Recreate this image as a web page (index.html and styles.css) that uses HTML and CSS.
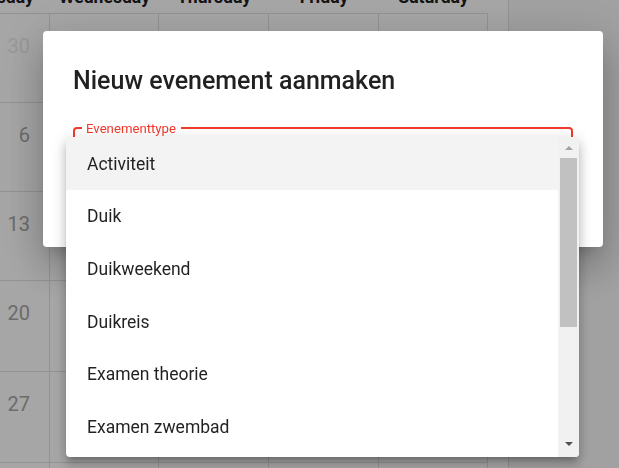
FILE: index.html
```html
<!DOCTYPE html>
<html lang="nl">
<head>
<meta charset="utf-8">
<title>Nieuw evenement aanmaken</title>
<link rel="stylesheet" href="styles.css">
</head>
<body>
<div class="app">
  <main class="calendar-pane">
    <div class="calendar">
      <div class="cal-head first">Tuesday</div>
      <div class="cal-head">Wednesday</div>
      <div class="cal-head">Thursday</div>
      <div class="cal-head">Friday</div>
      <div class="cal-head">Saturday</div>

      <div class="cal-cell"><span class="day muted">30</span></div>
      <div class="cal-cell"><span class="day muted">31</span></div>
      <div class="cal-cell"><span class="day">1</span></div>
      <div class="cal-cell"><span class="day">2</span></div>
      <div class="cal-cell"><span class="day">3</span></div>

      <div class="cal-cell"><span class="day">6</span></div>
      <div class="cal-cell"><span class="day">7</span></div>
      <div class="cal-cell"><span class="day">8</span></div>
      <div class="cal-cell"><span class="day">9</span></div>
      <div class="cal-cell"><span class="day">10</span></div>

      <div class="cal-cell"><span class="day">13</span></div>
      <div class="cal-cell"><span class="day">14</span></div>
      <div class="cal-cell"><span class="day">15</span></div>
      <div class="cal-cell"><span class="day">16</span></div>
      <div class="cal-cell"><span class="day">17</span></div>

      <div class="cal-cell"><span class="day">20</span></div>
      <div class="cal-cell"><span class="day">21</span></div>
      <div class="cal-cell"><span class="day">22</span></div>
      <div class="cal-cell"><span class="day">23</span></div>
      <div class="cal-cell"><span class="day">24</span></div>

      <div class="cal-cell"><span class="day">27</span></div>
      <div class="cal-cell"><span class="day">28</span></div>
      <div class="cal-cell"><span class="day">29</span></div>
      <div class="cal-cell"><span class="day">30</span></div>
      <div class="cal-cell"><span class="day">31</span></div>

      <div class="cal-cell"></div>
      <div class="cal-cell"></div>
      <div class="cal-cell"></div>
      <div class="cal-cell"></div>
      <div class="cal-cell"></div>
    </div>
  </main>
  <aside class="side-pane"></aside>
</div>

<div class="scrim"></div>

<div class="dialog">
  <h2 class="dialog-title">Nieuw evenement aanmaken</h2>
  <fieldset class="field">
    <legend class="field-label">Evenementtype</legend>
  </fieldset>
</div>

<div class="menu">
  <ul class="menu-list">
    <li class="menu-item active">Activiteit</li>
    <li class="menu-item">Duik</li>
    <li class="menu-item">Duikweekend</li>
    <li class="menu-item">Duikreis</li>
    <li class="menu-item">Examen theorie</li>
    <li class="menu-item">Examen zwembad</li>
  </ul>
  <div class="scrollbar">
    <div class="sb-btn"><span class="arrow arrow-up"></span></div>
    <div class="sb-track"><div class="sb-thumb"></div></div>
    <div class="sb-btn sb-btn-down"><span class="arrow arrow-down"></span></div>
  </div>
</div>
</body>
</html>
```

FILE: styles.css
```css
* { box-sizing: border-box; }

html, body {
  margin: 0;
  padding: 0;
}

body {
  width: 619px;
  height: 468px;
  overflow: hidden;
  background: #ffffff;
  font-family: Roboto, "Noto Sans", "Liberation Sans", sans-serif;
  color: rgba(0, 0, 0, 0.87);
}

.app {
  display: flex;
  height: 468px;
}

.calendar-pane {
  flex: none;
  width: 509px;
  overflow: hidden;
  background: #ffffff;
  border-right: 1px solid #e0e0e0;
}

.side-pane {
  flex: 1;
  background: #f7f7f7;
}

.calendar {
  display: grid;
  grid-template-columns: 111px 109px 110px 110px 109px;
  grid-template-rows: 26px 89px 89px 89px 91px 91px 40px;
  margin: -12px 0 0 -61px;
  width: 549px;
}

.cal-head {
  border-bottom: 1px solid #e0e0e0;
  text-align: center;
  font-size: 17.6px;
  font-weight: 700;
  line-height: 14px;
  padding-top: 1.5px;
  color: #202020;
  overflow: hidden;
}

.cal-head.first {
  padding-left: 12px;
}

.cal-cell {
  border-right: 1px solid #e0e0e0;
  border-bottom: 1px solid #e0e0e0;
  display: flex;
  justify-content: flex-end;
  align-items: flex-start;
  padding: 20px 19px 0 0;
}

.day {
  font-size: 20px;
  line-height: 24px;
  color: #a6a6a6;
}

.day.muted {
  color: #e9e9e9;
}

.scrim {
  position: fixed;
  inset: 0;
  background: rgba(0, 0, 0, 0.35);
}

.dialog {
  position: fixed;
  left: 43px;
  top: 31px;
  width: 560px;
  height: 216px;
  background: #ffffff;
  border-radius: 4px;
  padding: 36px 30px 0 30px;
  box-shadow: 0 11px 15px -7px rgba(0, 0, 0, 0.2),
              0 24px 38px 3px rgba(0, 0, 0, 0.14),
              0 9px 46px 8px rgba(0, 0, 0, 0.12);
}

.dialog-title {
  margin: 0;
  font-size: 25px;
  font-weight: 500;
  line-height: 28px;
  color: rgba(0, 0, 0, 0.87);
}

.field {
  margin: 24px 0 0 0;
  padding: 0 0 0 7px;
  min-width: 0;
  height: 62px;
  border: 2px solid #f2392c;
  border-radius: 4px;
}

.field-label {
  padding: 2px 5px 0 4px;
  font-size: 13.2px;
  line-height: 16px;
  color: #f2392c;
}

.menu {
  position: fixed;
  left: 66px;
  top: 137px;
  width: 513px;
  height: 320px;
  display: flex;
  background: #ffffff;
  border-radius: 4px;
  overflow: hidden;
  box-shadow: 0 5px 5px -3px rgba(0, 0, 0, 0.2),
              0 8px 10px 1px rgba(0, 0, 0, 0.14),
              0 3px 14px 2px rgba(0, 0, 0, 0.12);
}

.menu-list {
  flex: 1;
  margin: 0;
  padding: 0;
  list-style: none;
  overflow: hidden;
}

.menu-item {
  height: 52.6px;
  display: flex;
  align-items: center;
  padding: 1px 21px 0 21px;
  font-size: 17.5px;
  color: rgba(0, 0, 0, 0.87);
}

.menu-item.active {
  background: #f3f3f3;
}

.scrollbar {
  flex: none;
  width: 21px;
  display: flex;
  flex-direction: column;
  background: #f1f1f1;
}

.sb-btn {
  flex: none;
  height: 21px;
  display: flex;
  align-items: center;
  justify-content: center;
}

.sb-btn-down {
  align-items: flex-start;
  padding-top: 6px;
}

.sb-track {
  flex: 1;
}

.sb-thumb {
  height: 169px;
  margin: 0 2px;
  background: #c1c1c1;
}

.arrow {
  width: 0;
  height: 0;
  border-left: 4.5px solid transparent;
  border-right: 4.5px solid transparent;
}

.arrow-up {
  border-bottom: 4.5px solid #a3a3a3;
}

.arrow-down {
  border-top: 4.5px solid #505050;
}
```
